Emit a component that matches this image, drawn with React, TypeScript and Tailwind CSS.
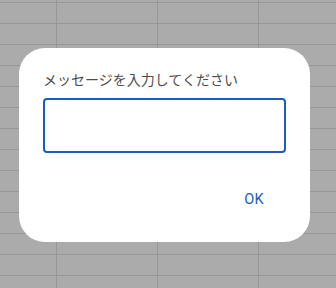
import React from "react";

const rows = Array.from({ length: 15 });
const cols = ["w-[57px]", "w-[101px]", "w-[101px]", "flex-1"];

export default function App() {
  return (
    <div className="relative w-[336px] h-[288px] overflow-hidden bg-[#ababab]" style={{ fontFamily: 'Roboto, "Noto Sans CJK JP", sans-serif' }}>
      <div className="flex flex-col mt-[-18px]">
        {rows.map((_, i) => (
          <div key={i} className="flex h-[21px] border-b border-[#979797]">
            {cols.map((c, j) => (
              <div key={j} className={`${c} h-full ${j < 3 ? "border-r border-[#979797]" : ""}`} />
            ))}
          </div>
        ))}
      </div>
      <div className="absolute left-[19px] top-[48px] w-[291px] h-[194px] rounded-[26px] bg-white flex flex-col px-6 pt-[22px]">
        <div className="text-[14px] leading-[20px] text-[#4d4d4d]">メッセージを入力してください</div>
        <div className="mt-2 h-[55px] w-full rounded-[4px] border-2 border-[#1b5cbd]" />
        <div className="flex justify-end mt-[37px] pr-[22px]">
          <span className="text-[14.5px] leading-[20px] font-normal tracking-[0.3px] text-[#1b5cbd]">OK</span>
        </div>
      </div>
    </div>
  );
}
